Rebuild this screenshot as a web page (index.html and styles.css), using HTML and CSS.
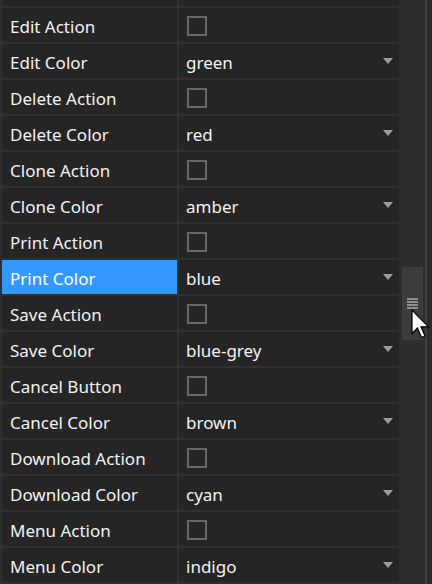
FILE: index.html
```html
<!DOCTYPE html>
<html>
<head>
<meta charset="utf-8">
<link rel="stylesheet" href="styles.css">
</head>
<body>
<div class="frame">
  <div class="grid">
    <div class="cell stub"></div><div class="cell stub"></div>

    <div class="cell name">Edit Action</div><div class="cell value"><span class="check"></span></div>
    <div class="cell name">Edit Color</div><div class="cell value select"><span>green</span><span class="arrow"></span></div>
    <div class="cell name">Delete Action</div><div class="cell value"><span class="check"></span></div>
    <div class="cell name">Delete Color</div><div class="cell value select"><span>red</span><span class="arrow"></span></div>
    <div class="cell name">Clone Action</div><div class="cell value"><span class="check"></span></div>
    <div class="cell name">Clone Color</div><div class="cell value select"><span>amber</span><span class="arrow"></span></div>
    <div class="cell name">Print Action</div><div class="cell value"><span class="check"></span></div>
    <div class="cell name selected">Print Color</div><div class="cell value select"><span>blue</span><span class="arrow"></span></div>
    <div class="cell name">Save Action</div><div class="cell value"><span class="check"></span></div>
    <div class="cell name">Save Color</div><div class="cell value select"><span>blue-grey</span><span class="arrow"></span></div>
    <div class="cell name">Cancel Button</div><div class="cell value"><span class="check"></span></div>
    <div class="cell name">Cancel Color</div><div class="cell value select"><span>brown</span><span class="arrow"></span></div>
    <div class="cell name">Download Action</div><div class="cell value"><span class="check"></span></div>
    <div class="cell name">Download Color</div><div class="cell value select"><span>cyan</span><span class="arrow"></span></div>
    <div class="cell name">Menu Action</div><div class="cell value"><span class="check"></span></div>
    <div class="cell name">Menu Color</div><div class="cell value select"><span>indigo</span><span class="arrow"></span></div>
  </div>
  <div class="scrollbar">
    <div class="track">
      <div class="thumb">
        <div class="grip"><i></i><i></i><i></i><i></i></div>
      </div>
    </div>
    <div class="rail"></div>
    <div class="edge"></div>
  </div>
  <svg class="cursor" width="20" height="32" viewBox="0 0 20 32">
    <path d="M1 1 L1 24.5 L6.5 19 L10.5 28.5 L14 27 L10 17.8 L17.5 17.8 Z" fill="#ffffff" stroke="#000000" stroke-width="1.2" stroke-linejoin="miter"/>
  </svg>
</div>
</body>
</html>
```
FILE: styles.css
```css
html, body {
  margin: 0;
  padding: 0;
  background: #252525;
}
.frame {
  position: relative;
  display: flex;
  width: 432px;
  height: 584px;
  overflow: hidden;
  font-family: "Noto Sans", "Segoe UI", sans-serif;
  font-size: 17px;
  color: #f2f2f2;
}
.grid {
  display: grid;
  grid-template-columns: 175px 220px;
  grid-template-rows: 6px repeat(16, 34px);
  gap: 2px;
  padding: 0 0 2px 2px;
  background: #303030;
  width: 397px;
}
.cell {
  background: #252525;
  display: flex;
  align-items: center;
  padding-top: 2px;
  box-sizing: border-box;
}
.stub {
  padding: 0;
}
.name {
  padding-left: 8px;
}
.name.selected {
  background: #3399ff;
  color: #ffffff;
}
.value {
  padding-left: 7px;
  padding-right: 6px;
}
.select {
  justify-content: space-between;
}
.check {
  width: 20px;
  height: 20px;
  box-sizing: border-box;
  border: 2px solid #676767;
  margin-left: 1px;
  margin-top: -1px;
  background: #252525;
}
.arrow {
  width: 0;
  height: 0;
  border-left: 5px solid transparent;
  border-right: 5px solid transparent;
  border-top: 6px solid #9a9a9a;
  margin-top: -3px;
}
.scrollbar {
  display: flex;
  width: 33px;
  height: 584px;
}
.track {
  width: 26px;
  background: #2d2d2d;
}
.thumb {
  margin: 267px 0 0 3px;
  width: 21px;
  height: 73px;
  background: #3c3c3e;
  display: flex;
  justify-content: center;
}
.grip {
  margin-top: 31px;
  display: flex;
  flex-direction: column;
  gap: 1px;
}
.grip i {
  display: block;
  width: 11px;
  height: 2px;
  background: #8e8e8e;
}
.rail {
  width: 2px;
  background: #3e3e3e;
}
.edge {
  width: 5px;
  background: #2a2a2a;
}
.cursor {
  position: absolute;
  left: 411px;
  top: 309px;
}
```
